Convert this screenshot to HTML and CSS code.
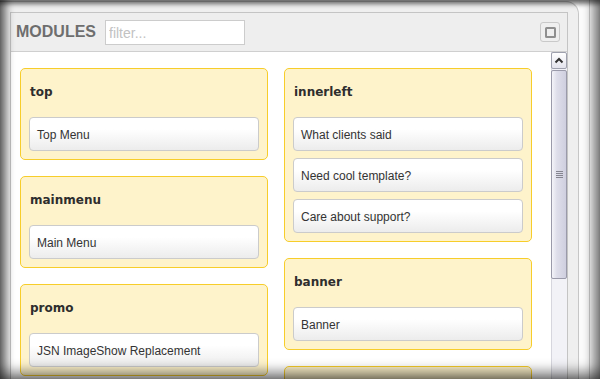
FILE: index.html
```html
<!DOCTYPE html>
<html>
<head>
<meta charset="utf-8">
<link rel="stylesheet" href="styles.css">
</head>
<body>
<div class="screen">
  <div class="frame">
    <div class="panel">
      <div class="panel-head">
        <span class="panel-title">MODULES</span>
        <input class="filter" type="text" placeholder="filter...">
        <button class="max-btn" type="button"><span class="max-icon"></span></button>
      </div>
      <div class="panel-body">
        <div class="cards">
          <div class="col">
            <div class="card">
              <div class="card-title">top</div>
              <div class="item">Top Menu</div>
            </div>
            <div class="card">
              <div class="card-title">mainmenu</div>
              <div class="item">Main Menu</div>
            </div>
            <div class="card">
              <div class="card-title">promo</div>
              <div class="item">JSN ImageShow Replacement</div>
            </div>
          </div>
          <div class="col">
            <div class="card">
              <div class="card-title">innerleft</div>
              <div class="item">What clients said</div>
              <div class="item">Need cool template?</div>
              <div class="item">Care about support?</div>
            </div>
            <div class="card">
              <div class="card-title">banner</div>
              <div class="item">Banner</div>
            </div>
            <div class="card card-empty"></div>
          </div>
        </div>
        <div class="scrollbar">
          <div class="sb-up">
            <svg width="14" height="14" viewBox="0 0 14 14"><polyline points="3.5,8.5 7,5 10.5,8.5" fill="none" stroke="#333" stroke-width="2"/></svg>
          </div>
          <div class="sb-thumb"><span class="grip"></span></div>
        </div>
      </div>
    </div>
  </div>
  <div class="side"></div>
  <div class="vignette"></div>
</div>
</body>
</html>
```
FILE: styles.css
```css
html, body {
  margin: 0;
  padding: 0;
}
body {
  width: 600px;
  height: 379px;
  overflow: hidden;
  background: #fff;
  font-family: "Liberation Sans", Arial, sans-serif;
}
.screen {
  position: relative;
  width: 600px;
  height: 379px;
  overflow: hidden;
  display: flex;
  align-items: flex-start;
  background: #fff;
}
.frame {
  flex: none;
  width: 580px;
  height: 420px;
  box-sizing: border-box;
  margin-left: -1px;
  margin-top: 1px;
  border: 1px solid #c6c6c6;
  border-bottom: none;
  border-top-right-radius: 13px;
  background: #efefef;
  padding: 10px 10px 0 10px;
}
.panel {
  height: 420px;
  border: 1px solid #c4c4c4;
  background: #fff;
  display: flex;
  flex-direction: column;
}
.panel-head {
  height: 38px;
  flex: none;
  background: #eeeeee;
  border-bottom: 1px solid #cfcfcf;
  display: flex;
  align-items: center;
  padding: 0 7px 0 4px;
}
.panel-title {
  font-size: 16px;
  font-weight: bold;
  color: #6e6e6e;
  width: 90px;
  flex: none;
  padding-left: 1px;
}
.filter {
  box-sizing: border-box;
  width: 140px;
  height: 25px;
  margin: 1px 0 0 -1px;
  border: 1px solid #cccccc;
  background: #fff;
  padding: 0 3px;
  font-family: "Liberation Sans", Arial, sans-serif;
  font-size: 14px;
  color: #555;
  outline: none;
}
.filter::placeholder {
  color: #c2c2c2;
}
.max-btn {
  margin-left: auto;
  width: 20px;
  height: 20px;
  box-sizing: border-box;
  border: 1px solid #c9c9c9;
  border-radius: 3px;
  background: #efefef;
  padding: 0;
  display: flex;
  align-items: center;
  justify-content: center;
}
.max-icon {
  display: block;
  width: 11px;
  height: 11px;
  box-sizing: border-box;
  border: 2px solid #8f8f8f;
  border-radius: 1.5px;
}
.panel-body {
  flex: 1;
  display: flex;
  min-height: 0;
}
.cards {
  flex: 1;
  display: flex;
  align-items: flex-start;
  gap: 16px;
  padding: 16px 0 0 9px;
}
.col {
  width: 248px;
  display: flex;
  flex-direction: column;
  gap: 16px;
}
.card {
  border: 1px solid #f7cd2a;
  border-radius: 5px;
  background: #fef3cb;
  padding: 0 8px 8px;
  display: flex;
  flex-direction: column;
  gap: 7px;
}
.card-empty {
  height: 80px;
}
.card-title {
  font-family: "DejaVu Sans", Verdana, sans-serif;
  font-weight: bold;
  font-size: 12px;
  color: #2e2e2e;
  line-height: 46px;
  padding: 0 0 2px 1px;
  margin-bottom: -7px;
}
.item {
  box-sizing: border-box;
  height: 34px;
  border: 1px solid #cbcbcb;
  border-radius: 4px;
  background: linear-gradient(#ffffff 35%, #ececec);
  padding: 0 7px;
  font-size: 12px;
  line-height: 34px;
  overflow: hidden;
  color: #333;
}
.scrollbar {
  flex: none;
  width: 16px;
  background: #f2f2f7;
  box-shadow: inset 1px 0 #d6d6de;
  display: flex;
  flex-direction: column;
}
.sb-up {
  height: 17px;
  box-sizing: border-box;
  border: 1px solid #9ea0ad;
  border-radius: 2px;
  background: linear-gradient(#ffffff, #e3e3ec);
  display: flex;
  align-items: center;
  justify-content: center;
}
.sb-thumb {
  margin-top: 1px;
  height: 209px;
  box-sizing: border-box;
  border: 1px solid #9a9aaa;
  border-radius: 2px;
  background: linear-gradient(to right, #f4f4f9 0%, #dedeea 35%, #cfcfdf 100%);
  display: flex;
  align-items: center;
  justify-content: center;
}
.grip {
  display: block;
  width: 7px;
  height: 7px;
  background: repeating-linear-gradient(#858590 0 1px, transparent 1px 2px);
}
.side {
  flex: none;
  width: 10px;
  height: 379px;
  border-right: 1px solid #cfcfcf;
  background: #fbfbfb;
}
.vignette {
  position: absolute;
  inset: 0;
  pointer-events: none;
  box-shadow:
    inset 10px 0 8px -4px rgba(0, 0, 0, 0.55),
    inset -12px 0 10px -4px rgba(0, 0, 0, 0.45),
    inset 0 6px 5px -2px rgba(0, 0, 0, 0.5),
    inset 0 -14px 12px -6px rgba(0, 0, 0, 0.45);
}
```
